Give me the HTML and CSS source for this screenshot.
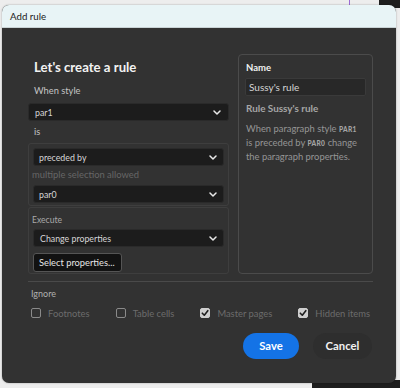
FILE: index.html
```html
<!DOCTYPE html>
<html>
<head>
<meta charset="utf-8">
<link rel="stylesheet" href="styles.css">
</head>
<body>
<div class="window">
  <div class="titlebar">Add rule</div>
  <div class="content">
    <div class="main">
      <div class="left">
        <div class="heading">Let's create a rule</div>
        <div class="label label-style">When style</div>
        <div class="select select-top"><span>par1</span><svg class="chev" viewBox="0 0 8 5" width="8" height="5"><path d="M1 1 L4 4 L7 1" /></svg></div>
        <div class="label label-is">is</div>
        <div class="group group-cond">
          <div class="select"><span>preceded by</span><svg class="chev" viewBox="0 0 8 5" width="8" height="5"><path d="M1 1 L4 4 L7 1" /></svg></div>
          <div class="hint">multiple selection allowed</div>
          <div class="select select-par0"><span>par0</span><svg class="chev" viewBox="0 0 8 5" width="8" height="5"><path d="M1 1 L4 4 L7 1" /></svg></div>
        </div>
        <div class="group group-exec">
          <div class="glabel">Execute</div>
          <div class="select"><span>Change properties</span><svg class="chev" viewBox="0 0 8 5" width="8" height="5"><path d="M1 1 L4 4 L7 1" /></svg></div>
          <div class="btn-sm">Select properties...</div>
        </div>
      </div>
      <div class="panel">
        <div class="panel-label">Name</div>
        <div class="input">Sussy's rule</div>
        <div class="rule-title">Rule Sussy's rule</div>
        <p class="rule-desc"><span>When paragraph style</span> <b class="sc">PAR1</b> <span>is preceded by</span> <b class="sc">PAR0</b> <span>change</span> <span>the paragraph properties.</span></p>
      </div>
    </div>
    <div class="divider"></div>
    <div class="ignore-label">Ignore</div>
    <div class="checks">
      <div class="check"><span class="box"></span><span>Footnotes</span></div>
      <div class="check"><span class="box"></span><span>Table cells</span></div>
      <div class="check"><span class="box checked"><svg viewBox="0 0 10 10" width="10" height="10"><path d="M2.3 5.2 L4.3 7.2 L7.8 2.7" /></svg></span><span>Master pages</span></div>
      <div class="check"><span class="box checked"><svg viewBox="0 0 10 10" width="10" height="10"><path d="M2.3 5.2 L4.3 7.2 L7.8 2.7" /></svg></span><span>Hidden items</span></div>
    </div>
    <div class="actions">
      <div class="btn btn-save">Save</div>
      <div class="btn btn-cancel">Cancel</div>
    </div>
  </div>
</div>
</body>
</html>
```
FILE: styles.css
```css
* { box-sizing: border-box; }
html, body { margin: 0; padding: 0; }
body {
  width: 400px;
  height: 388px;
  overflow: hidden;
  font-family: "Lato", "Noto Sans", sans-serif;
  background:
    linear-gradient(#9b6bd6, #9b6bd6) 349px 0 / 1px 5px no-repeat,
    linear-gradient(#1e1e1e, #1e1e1e) right top / 21px 8px no-repeat,
    linear-gradient(#1e1e1e, #1e1e1e) right bottom / 88px 8px no-repeat,
    #ededed;
  padding-top: 5px;
  padding-left: 2px;
}
.window {
  width: 394px;
  height: 378px;
  border-radius: 7px;
  overflow: hidden;
  background: #323232;
  box-shadow: 0 0 2px rgba(0,0,0,0.35);
  display: flex;
  flex-direction: column;
}
.titlebar {
  height: 23px;
  flex: none;
  background: #e8f4f6;
  border-bottom: 1px solid #c9d3d5;
  color: #1a1a1a;
  font-size: 9.7px;
  line-height: 22px;
  padding-left: 8px;
}
.content {
  flex: 1;
  padding: 26px 23px 0 26px;
  display: flex;
  flex-direction: column;
}
.main {
  display: flex;
  gap: 9px;
  height: 220px;
}
.left {
  width: 201px;
  display: flex;
  flex-direction: column;
}
.heading {
  margin-top: 6px;
  padding-left: 6px;
  font-size: 13.2px;
  font-weight: 700;
  line-height: 14px;
  color: #f2f2f2;
}
.label {
  padding-left: 6px;
  font-size: 9.3px;
  line-height: 14px;
  color: #c4c4c4;
}
.label-style { margin-top: 10px; }
.label-is { margin-top: 4px; }
.select {
  height: 18px;
  background: #1c1c1c;
  border: 1px solid #2a2a2a;
  border-radius: 3px;
  display: flex;
  align-items: center;
  justify-content: space-between;
  padding: 0 7px 0 6px;
  font-size: 8.8px;
  color: #d6d6d6;
  white-space: nowrap;
}
.select-top { margin-top: 5px; }
.chev { flex: none; display: block; }
.chev path { fill: none; stroke: #e8e8e8; stroke-width: 1.5; stroke-linecap: round; stroke-linejoin: round; }
.group {
  border: 1px solid #3e3e3e;
  border-radius: 3px;
  padding: 0 4px;
  display: flex;
  flex-direction: column;
}
.group-cond {
  margin-top: 4px;
  padding-top: 4px;
  padding-bottom: 2px;
}
.group-cond .select { padding-left: 5px; padding-right: 6px; }
.hint {
  margin-top: 2px;
  margin-left: -1px;
  line-height: 14px;
  font-size: 9.4px;
  color: #666666;
  white-space: nowrap;
}
.select-par0 { margin-top: 3px; }
.group-exec {
  margin-top: 1px;
  padding-top: 5px;
  padding-bottom: 1px;
}
.glabel {
  margin-left: -1px;
  line-height: 14px;
  font-size: 8.6px;
  color: #a8a8a8;
}
.group-exec .select { margin-top: 2px; padding-right: 6px; }
.btn-sm {
  margin-top: 6px;
  align-self: flex-start;
  height: 19px;
  width: 89px;
  background: #121212;
  border: 1px solid #555555;
  border-radius: 3px;
  font-size: 9.3px;
  color: #e6e6e6;
  line-height: 17px;
  padding-left: 5px;
  white-space: nowrap;
}
.panel {
  width: 135px;
  border: 1px solid #4b4b4b;
  border-radius: 4px;
  padding: 7px 6px 0 6px;
}
.panel-label {
  padding-left: 1px;
  font-size: 9.5px;
  font-weight: 700;
  line-height: 12px;
  color: #f0f0f0;
}
.input {
  margin-top: 4px;
  height: 18px;
  background: #282828;
  border: 1px solid #3a3a3a;
  border-radius: 2px;
  font-size: 10px;
  line-height: 16px;
  padding-left: 3px;
  color: #d4d4d4;
  white-space: nowrap;
}
.rule-title {
  margin-top: 6px;
  padding-left: 1px;
  font-size: 9.9px;
  font-weight: 700;
  line-height: 13px;
  color: #a6a6a6;
  white-space: nowrap;
}
.rule-desc {
  margin: 7px 0 0 0;
  padding: 0 2px 0 1px;
  font-size: 9.4px;
  line-height: 14px;
  color: #959595;
}
.sc {
  font-size: 6.6px;
  font-weight: 900;
  letter-spacing: 0.3px;
  color: #a4a4a4;
}
.divider {
  margin-top: 7px;
  height: 1px;
  width: 345px;
  background: #4a4a4a;
}
.ignore-label {
  margin-top: 6px;
  padding-left: 3px;
  font-size: 9px;
  line-height: 12px;
  color: #b0b0b0;
}
.checks {
  margin-top: 6px;
  padding-left: 3px;
  display: flex;
  gap: 26px;
  height: 14px;
  align-items: center;
}
.check {
  display: flex;
  align-items: center;
  gap: 7px;
  font-size: 9.4px;
  color: #6c6c6c;
  white-space: nowrap;
  flex: none;
}
.box {
  width: 10px;
  height: 10px;
  border: 1.5px solid #8a8a8a;
  border-radius: 2px;
  display: flex;
  align-items: center;
  justify-content: center;
  flex: none;
}
.box.checked {
  background: #cfcfcf;
  border-color: #cfcfcf;
}
.box svg { display: block; flex: none; }
.box path { fill: none; stroke: #1e1e1e; stroke-width: 1.6; stroke-linecap: round; stroke-linejoin: round; }
.actions {
  margin-top: 13px;
  padding-right: 1px;
  display: flex;
  justify-content: flex-end;
  gap: 14px;
}
.btn {
  height: 26px;
  border-radius: 13px;
  font-size: 11.3px;
  font-weight: 700;
  line-height: 26px;
  text-align: center;
  color: #ffffff;
}
.btn-save {
  width: 56px;
  background: #1473e6;
}
.btn-cancel {
  width: 59px;
  background: #2e2e2e;
  color: #f2f2f2;
}
```
